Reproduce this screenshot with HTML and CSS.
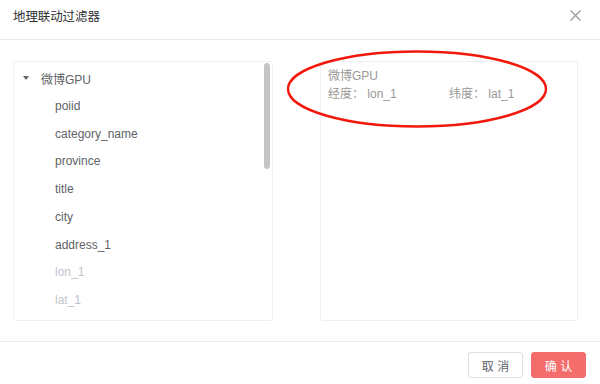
FILE: index.html
```html
<!DOCTYPE html>
<html lang="zh">
<head>
<meta charset="utf-8">
<title>地理联动过滤器</title>
<link rel="stylesheet" href="styles.css">
</head>
<body>
<div class="dialog">
  <div class="header">
    <span class="title">地理联动过滤器</span>
    <span class="close">
      <svg width="11" height="11" viewBox="0 0 11 11"><path d="M0.5 0.5 L10.5 10.5 M10.5 0.5 L0.5 10.5" stroke="#909399" stroke-width="1.1" fill="none"/></svg>
    </span>
  </div>
  <div class="body">
    <div class="panel left">
      <div class="tree">
        <div class="row parent"><span class="caret"></span><span>微博GPU</span></div>
        <div class="row child">poiid</div>
        <div class="row child">category_name</div>
        <div class="row child">province</div>
        <div class="row child">title</div>
        <div class="row child">city</div>
        <div class="row child">address_1</div>
        <div class="row child disabled">lon_1</div>
        <div class="row child disabled">lat_1</div>
      </div>
      <div class="scrollbar"></div>
    </div>
    <div class="panel right">
      <div class="sel-name">微博GPU</div>
      <div class="sel-row">
        <span class="sel-item">经度：&nbsp;lon_1</span>
        <span class="sel-item">纬度：&nbsp;lat_1</span>
      </div>
    </div>
    <svg class="annot" width="270" height="84" viewBox="0 0 270 84"><ellipse cx="135" cy="42" rx="129" ry="37.5" fill="none" stroke="#f3180c" stroke-width="2.4"/></svg>
  </div>
  <div class="footer">
    <button class="btn cancel">取 消</button>
    <button class="btn confirm">确 认</button>
  </div>
</div>
</body>
</html>
```
FILE: styles.css
```css
html, body {
  margin: 0;
  padding: 0;
  background: #fff;
}
body {
  font-family: "Liberation Sans", "Noto Sans CJK SC", sans-serif;
  font-size: 12px;
  width: 600px;
  height: 384px;
  overflow: hidden;
}
.dialog {
  width: 600px;
}
.header {
  height: 40px;
  border-bottom: 1px solid #e8e8e8;
  display: flex;
  align-items: center;
  justify-content: space-between;
  padding: 0 19px 8px 13px;
  box-sizing: border-box;
}
.title {
  color: #303133;
  font-size: 12.5px;
  letter-spacing: -0.1px;
}
.close {
  display: flex;
  width: 11px;
  height: 11px;
}
.body {
  position: relative;
  display: flex;
  gap: 47px;
  padding: 21px 22px 20px 13px;
  border-bottom: 1px solid #ececec;
}
.panel {
  height: 260px;
  border: 1px solid #efefef;
  border-radius: 3px;
  box-sizing: border-box;
}
.left {
  width: 260px;
  display: flex;
  justify-content: space-between;
  padding: 0 2px 0 8px;
}
.tree {
  padding-top: 2px;
}
.scrollbar {
  margin-top: 1px;
}
.row {
  height: 27.75px;
  display: flex;
  align-items: center;
  color: #606266;
  white-space: nowrap;
}
.parent {
  height: 28px;
}
.caret {
  width: 0;
  height: 0;
  border-left: 3px solid transparent;
  border-right: 3px solid transparent;
  border-top: 4px solid #666;
  margin: 0 12px 0 1px;
}
.child {
  padding-left: 33px;
}
.disabled {
  color: #c0c4cc;
}
.scrollbar {
  width: 6px;
  height: 106px;
  background: #c4c4c4;
  border-radius: 3px;
}
.right {
  width: 258px;
  padding: 5px 7px;
  color: #999;
}
.sel-name {
  height: 18px;
  line-height: 18px;
}
.sel-row {
  display: flex;
  height: 19px;
  line-height: 19px;
}
.sel-item {
  width: 121px;
  white-space: nowrap;
}
.annot {
  position: absolute;
  left: 282px;
  top: 7px;
}
.footer {
  display: flex;
  justify-content: flex-end;
  gap: 8px;
  padding: 10px 14px 0 0;
}
.btn {
  width: 55px;
  height: 26px;
  border-radius: 3px;
  font-family: "Liberation Sans", "Noto Sans CJK SC", sans-serif;
  font-size: 12px;
  padding: 0;
  cursor: pointer;
}
.cancel {
  background: #fff;
  border: 1px solid #dcdfe6;
  color: #606266;
}
.confirm {
  background: #f56c6c;
  border: 1px solid #f56c6c;
  color: #fff;
}
```
